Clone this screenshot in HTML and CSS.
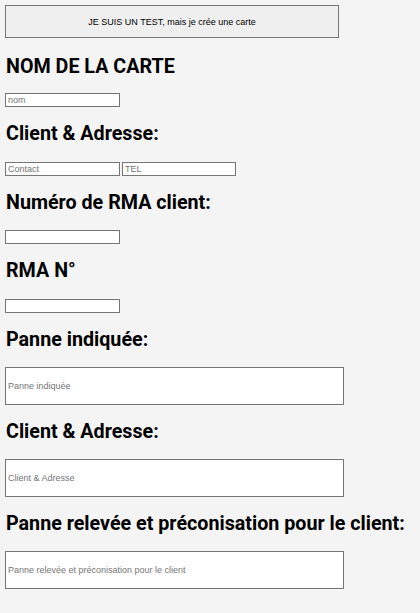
FILE: index.html
```html
<!DOCTYPE html>
<html lang="fr">
<head>
<meta charset="utf-8">
<title>Carte</title>
<link rel="stylesheet" href="styles.css">
</head>
<body>
<form class="card-form">
  <button type="button" class="test-btn">JE SUIS UN TEST, mais je crée une carte</button>

  <h2 class="label first">NOM DE LA CARTE</h2>
  <div class="row"><input class="field small" type="text" placeholder="nom"></div>

  <h2 class="label">Client &amp; Adresse:</h2>
  <div class="row">
    <input class="field small" type="text" placeholder="Contact">
    <input class="field small tel" type="text" placeholder="TEL">
  </div>

  <h2 class="label">Numéro de RMA client:</h2>
  <div class="row"><input class="field small" type="text"></div>

  <h2 class="label">RMA N°</h2>
  <div class="row"><input class="field small" type="text"></div>

  <h2 class="label">Panne indiquée:</h2>
  <div class="row"><input class="field big" type="text" placeholder="Panne indiquée"></div>

  <h2 class="label after-big">Client &amp; Adresse:</h2>
  <div class="row"><input class="field big" type="text" placeholder="Client &amp; Adresse"></div>

  <h2 class="label after-big">Panne relevée et préconisation pour le client:</h2>
  <div class="row"><input class="field big" type="text" placeholder="Panne relevée et préconisation pour le client"></div>
</form>
</body>
</html>
```

FILE: styles.css
```css
html, body {
  margin: 0;
  padding: 0;
  background: #f4f4f4;
}

body {
  padding: 5px;
  font-family: "Liberation Sans", Arial, sans-serif;
}

.card-form {
  display: flex;
  flex-direction: column;
  align-items: flex-start;
}

.test-btn {
  box-sizing: border-box;
  width: 334px;
  height: 33px;
  margin: 0;
  padding: 0;
  background: #efefef;
  border: 1px solid #767676;
  border-radius: 0;
  font-family: "Liberation Sans", Arial, sans-serif;
  font-size: 9px;
  color: #000;
}

.label {
  margin: 13px 0 13.5px 1px;
  font-family: Roboto, sans-serif;
  font-weight: 700;
  font-size: 19.7px;
  line-height: 28px;
  white-space: nowrap;
  color: #000;
}

.label.first {
  margin-top: 15px;
  margin-bottom: 12px;
}

.label.after-big {
  margin-top: 12.5px;
}

.row {
  display: flex;
  gap: 2px;
}

.field {
  box-sizing: border-box;
  margin: 0;
  padding: 0 2px;
  background: #fff;
  border: 1px solid #767676;
  border-radius: 0;
  font-family: "Liberation Sans", Arial, sans-serif;
  font-size: 9px;
  color: #000;
  outline: none;
}

.field::placeholder {
  color: #757575;
}

.field.small {
  width: 115px;
  height: 14px;
}

.field.small.tel {
  width: 114px;
}

.field.big {
  width: 339px;
  height: 38px;
}
```
